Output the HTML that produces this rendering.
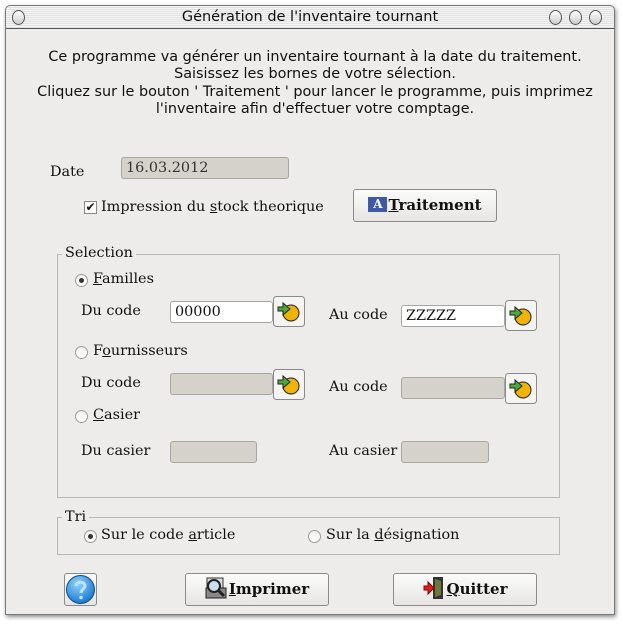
<!DOCTYPE html>
<html><head><meta charset="utf-8"><style>
*{box-sizing:border-box;margin:0;padding:0}
body{width:622px;height:625px;background:#fff;position:relative;overflow:hidden;font-family:"DejaVu Serif","Liberation Serif",serif;font-size:14.4px;color:#111}
.win{position:absolute;left:5px;top:5px;width:610px;height:610px;background:#edecea;border:1px solid #7a7a7a;border-radius:5px 5px 0 0;box-shadow:1px 2px 4px rgba(0,0,0,.45)}
.title{position:absolute;left:0;top:0;width:100%;height:23px;border-bottom:1px solid #555;border-radius:5px 5px 0 0;background:repeating-linear-gradient(#f4f4f4 0 1px,#e2e2e2 1px 2px);font-family:"DejaVu Sans",sans-serif;font-size:14.5px;text-align:center;line-height:22px;color:#111}
.circ{position:absolute;top:4px;width:13px;height:15px;border:1px solid #555;border-radius:50%;background:linear-gradient(#fff,#ccc)}
.a{position:absolute;white-space:nowrap}
.intro{position:absolute;left:0;top:49px;width:630px;text-align:center;font-family:"DejaVu Sans",sans-serif;font-size:14.4px;line-height:17.3px}
.inp{position:absolute;border:1px solid #a8a6a0;border-radius:3px;background:#d5d2cc;font-size:14.4px;padding-left:4px;line-height:20px}
.inp.w{background:#fff}
.btn{position:absolute;border:1px solid #8a8a8a;border-radius:3px;background:linear-gradient(#fbfbfa,#e6e5e2);font-weight:bold;font-size:15px;text-align:center}
.gb{position:absolute;border:1px solid #b9b8b4}
.leg{position:absolute;background:#edecea;padding:0 3px}
.rad{position:absolute;width:13px;height:13px;border:1px solid #9a9a9a;border-radius:50%;background:linear-gradient(#f0f0f0,#fff)}
.rad.on::after{content:"";position:absolute;left:3px;top:3px;width:5px;height:5px;border-radius:50%;background:#333}
u{text-decoration:underline}
.go{position:absolute;width:32px;height:31px}
</style></head><body>
<div class="win">
<div class="title">Génération de l'inventaire tournant
<div class="circ" style="left:6px"></div>
<div class="circ" style="left:543px"></div>
<div class="circ" style="left:563px"></div>
<div class="circ" style="left:583px"></div>
</div>
</div>
<div class="intro">Ce programme va générer un inventaire tournant à la date du traitement.<br>Saisissez les bornes de votre sélection.<br>Cliquez sur le bouton ' Traitement ' pour lancer le programme, puis imprimez<br>l'inventaire afin d'effectuer votre comptage.</div>

<div class="a" style="left:50px;top:164px">Date</div>
<div class="inp" style="left:121px;top:157px;width:168px;height:22px;color:#333">16.03.2012</div>

<div class="a" style="left:84px;top:201px;width:13px;height:13px;border:1px solid #888;background:#fff;font-size:12px;line-height:11px;text-align:center">✔</div>
<div class="a" style="left:101px;top:199px">Impression du <u>s</u>tock theorique</div>
<div class="btn" style="left:353px;top:189px;width:144px;height:33px;line-height:30px"><span style="display:inline-block;width:19px;height:15px;background:#3e5aa6;color:#fff;font-size:12px;line-height:15px;vertical-align:2px;margin-right:1px">A</span><u>T</u>raitement</div>

<div class="gb" style="left:57px;top:254px;width:503px;height:244px"></div>
<div class="leg" style="left:62px;top:245px">Selection</div>

<div class="rad on" style="left:75px;top:274px"></div>
<div class="a" style="left:93px;top:271px"><u>F</u>amilles</div>
<div class="a" style="left:81px;top:303px">Du code</div>
<div class="inp w" style="left:170px;top:301px;width:103px;height:22px">00000</div>
<svg class="go" style="left:273px;top:296px" viewBox="0 0 32 31"><rect x=".5" y=".5" width="31" height="30" rx="3" fill="#f4f4f2" stroke="#8a8a8a"/><circle cx="18" cy="17" r="8" fill="#f0b400" stroke="#222"/><path d="M5 11h5V7l7 6-7 6v-4H5z" fill="#4caa3c" stroke="#222"/></svg>
<div class="a" style="left:329px;top:307px">Au code</div>
<div class="inp w" style="left:401px;top:305px;width:104px;height:22px">ZZZZZ</div>
<svg class="go" style="left:505px;top:300px" viewBox="0 0 32 31"><rect x=".5" y=".5" width="31" height="30" rx="3" fill="#f4f4f2" stroke="#8a8a8a"/><circle cx="18" cy="17" r="8" fill="#f0b400" stroke="#222"/><path d="M5 11h5V7l7 6-7 6v-4H5z" fill="#4caa3c" stroke="#222"/></svg>

<div class="rad" style="left:75px;top:346px"></div>
<div class="a" style="left:93px;top:343px">F<u>o</u>urnisseurs</div>
<div class="a" style="left:81px;top:375px">Du code</div>
<div class="inp" style="left:170px;top:373px;width:103px;height:22px"></div>
<svg class="go" style="left:273px;top:369px" viewBox="0 0 32 31"><rect x=".5" y=".5" width="31" height="30" rx="3" fill="#f4f4f2" stroke="#8a8a8a"/><circle cx="18" cy="17" r="8" fill="#f0b400" stroke="#222"/><path d="M5 11h5V7l7 6-7 6v-4H5z" fill="#4caa3c" stroke="#222"/></svg>
<div class="a" style="left:329px;top:379px">Au code</div>
<div class="inp" style="left:401px;top:377px;width:104px;height:22px"></div>
<svg class="go" style="left:505px;top:373px" viewBox="0 0 32 31"><rect x=".5" y=".5" width="31" height="30" rx="3" fill="#f4f4f2" stroke="#8a8a8a"/><circle cx="18" cy="17" r="8" fill="#f0b400" stroke="#222"/><path d="M5 11h5V7l7 6-7 6v-4H5z" fill="#4caa3c" stroke="#222"/></svg>

<div class="rad" style="left:75px;top:410px"></div>
<div class="a" style="left:93px;top:407px"><u>C</u>asier</div>
<div class="a" style="left:81px;top:443px">Du casier</div>
<div class="inp" style="left:170px;top:441px;width:87px;height:22px"></div>
<div class="a" style="left:329px;top:443px">Au casier</div>
<div class="inp" style="left:401px;top:441px;width:88px;height:22px"></div>

<div class="gb" style="left:57px;top:517px;width:503px;height:38px"></div>
<div class="leg" style="left:62px;top:509px">Tri</div>
<div class="rad on" style="left:84px;top:530px"></div>
<div class="a" style="left:101px;top:527px">Sur le code <u>a</u>rticle</div>
<div class="rad" style="left:308px;top:530px"></div>
<div class="a" style="left:326px;top:527px">Sur la <u>d</u>ésignation</div>

<div class="btn" style="left:64px;top:573px;width:33px;height:33px"><svg width="31" height="31" viewBox="0 0 31 31" style="position:absolute;left:0;top:0"><defs><radialGradient id="g" cx=".4" cy=".3" r=".8"><stop offset="0" stop-color="#8fd4ff"/><stop offset="1" stop-color="#0a6cc8"/></radialGradient></defs><circle cx="15.5" cy="15.5" r="14" fill="url(#g)" stroke="#0d4f8f"/><path d="M11 12c0-5 9-5 9 0 0 3-4 3-4 7" fill="none" stroke="#bfe4ff" stroke-width="3"/><circle cx="16" cy="23.5" r="1.8" fill="#bfe4ff"/></svg></div>
<div class="btn" style="left:185px;top:573px;width:144px;height:33px;line-height:31px"><svg width="22" height="24" viewBox="0 0 22 24" style="vertical-align:-6px;margin-right:2px"><rect x="2" y="2" width="16" height="20" fill="#ddd" stroke="#333"/><rect x="1" y="12" width="20" height="10" fill="#888" stroke="#222"/><circle cx="9" cy="10" r="6" fill="#cde" stroke="#222" stroke-width="2"/><path d="M13 14l6 6" stroke="#222" stroke-width="3"/></svg><u>I</u>mprimer</div>
<div class="btn" style="left:393px;top:573px;width:144px;height:33px;line-height:31px"><svg width="22" height="24" viewBox="0 0 22 24" style="vertical-align:-6px;margin-right:2px"><rect x="10" y="1" width="10" height="22" fill="#333"/><path d="M12 3v18l6-2V5z" fill="#6b7a3a"/><path d="M1 10h4V6l6 6-6 6v-4H1z" fill="#e02020" stroke="#800"/></svg><u>Q</u>uitter</div>
</body></html>
